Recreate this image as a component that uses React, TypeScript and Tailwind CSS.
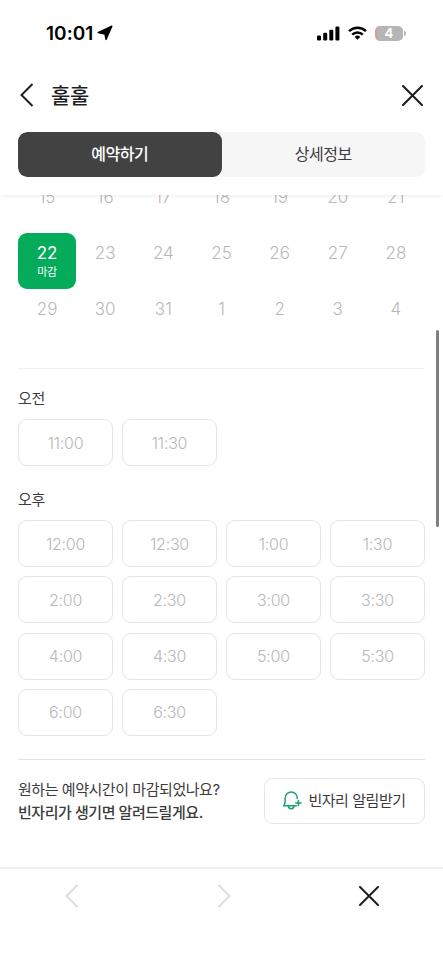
import { useState } from 'react';
import clsx from 'clsx';

const weeks = [
  [15, 16, 17, 18, 19, 20, 21],
  [22, 23, 24, 25, 26, 27, 28],
  [29, 30, 31, 1, 2, 3, 4],
];

const morningSlots = ['11:00', '11:30'];
const afternoonSlots = [
  '12:00', '12:30', '1:00', '1:30',
  '2:00', '2:30', '3:00', '3:30',
  '4:00', '4:30', '5:00', '5:30',
  '6:00', '6:30',
];

function StatusBar() {
  return (
    <div className="flex h-[66px] items-center justify-between pl-[46px] pr-[37px]">
      <div className="flex items-center gap-[4px] text-black">
        <span className="pt-px text-[19px] font-semibold leading-none tracking-[0.05px]">10:01</span>
        <svg width="16" height="16" viewBox="0 0 16 16" fill="currentColor" stroke="currentColor" strokeWidth="1.500" strokeLinejoin="round">
          <path d="M14.800 1.200 9 14.400 8 8.900 1.200 7.600z" />
        </svg>
      </div>
      <div className="flex items-center text-black">
        <svg width="23" height="15" viewBox="0 0 23 15" fill="currentColor">
          <rect x="0" y="9.500" width="4" height="5" rx="1.200" />
          <rect x="6.200" y="6.800" width="4" height="7.700" rx="1.200" />
          <rect x="12.300" y="3.700" width="4" height="10.800" rx="1.200" />
          <rect x="18.400" y="0.500" width="4" height="14" rx="1.200" />
        </svg>
        <svg className="ml-[8px]" width="19" height="14" viewBox="0 0 19 14" fill="none" stroke="currentColor" strokeWidth="2.500">
          <path d="M1 5.200a12.200 12.200 0 0 1 17 0" />
          <path d="M4.200 8.600a7.600 7.600 0 0 1 10.600 0" />
          <path d="M9.500 13.700 6.700 10.900a4 4 0 0 1 5.600 0z" fill="currentColor" stroke="none" />
        </svg>
        <div className="ml-[8px] flex h-[15px] w-[28px] items-center justify-center overflow-hidden rounded-[5px] border-l-2 border-[#e5989a] bg-[#b5b5b5] pr-[2px] text-[13px] font-bold leading-[15px] text-white">
          4
        </div>
        <div className="ml-px h-[5px] w-[2px] rounded-r-full bg-[#b5b5b5]" />
      </div>
    </div>
  );
}

function Cross({ size, className }: { size: number; className?: string }) {
  return (
    <svg width={size} height={size} viewBox="0 0 20 20" fill="none" stroke="currentColor" strokeWidth="2" strokeLinecap="round" className={className}>
      <path d="M1 1l18 18M19 1 1 19" />
    </svg>
  );
}

function Chevron({ className }: { className?: string }) {
  return (
    <svg width="14" height="24" viewBox="0 0 14 24" fill="none" stroke="currentColor" strokeWidth="2" className={className}>
      <path d="M12.500 1 1.500 12l11 11" />
    </svg>
  );
}

function SlotGrid({ slots }: { slots: string[] }) {
  return (
    <div className="grid grid-cols-4 gap-x-[9px] gap-y-[9.300px]">
      {slots.map((slot) => (
        <button key={slot} className="h-[47px] rounded-[9px] border border-[#e4e4e4] text-[16px] font-light tracking-[-0.25px] text-[#b8b8b8]">
          {slot}
        </button>
      ))}
    </div>
  );
}

export default function App() {
  const [tab, setTab] = useState('book');

  return (
    <main className="relative flex h-[960px] w-[443px] flex-col overflow-hidden bg-white font-[Inter,'Noto_Sans_CJK_KR',sans-serif] text-[#3c3c3c]">
      <header className="relative z-10 h-[195px] shrink-0 bg-white shadow-[0_1px_4px_rgba(0,0,0,0.08)]">
        <StatusBar />
        <div className="flex h-[58px] items-center pl-[20px] pr-[20px] text-[#1e1e23]">
          <Chevron />
          <h1 className="ml-[17px] text-[21px] font-medium leading-none tracking-[-0.2px]">훌훌</h1>
          <Cross size={21} className="ml-auto" />
        </div>
        <div className="mx-[18px] mt-[8px] grid h-[45px] grid-cols-2 overflow-hidden rounded-[9px] bg-[#f6f6f6] text-[16px] tracking-[-0.5px]">
          <button
            onClick={() => setTab('book')}
            className={clsx('rounded-[9px] pb-px', tab === 'book' && 'bg-[#424242] font-medium text-white')}
          >
            예약하기
          </button>
          <button
            onClick={() => setTab('info')}
            className={clsx('rounded-[9px] pb-px', tab === 'info' && 'bg-[#424242] font-medium text-white')}
          >
            상세정보
          </button>
        </div>
      </header>

      <section className="h-[672px] shrink-0 overflow-hidden px-[18px]">
        {/* calendar is scrolled slightly under the header */}
        <div className="-mt-[18px] grid grid-cols-7">
          {weeks.flat().map((day) => (
            <div
              key={day}
              className={clsx(
                'flex h-[56px] flex-col items-center rounded-[9px] pt-[10px] text-[17px] leading-[20px]',
                day === 22 ? 'bg-[#03ab5a] text-white' : 'font-light text-[#b8b8b8]'
              )}
            >
              {day}
              {day === 22 && <span className="mt-px text-[11px] leading-[16px] tracking-[-0.4px]">마감</span>}
            </div>
          ))}
        </div>

        <div className="mt-[23px] border-t border-[#f0f0f0] pt-[19px]">
          <h2 className="mb-[9px] text-[15px] leading-[22px] tracking-[-0.3px]">오전</h2>
          <SlotGrid slots={morningSlots} />
          <h2 className="mb-[9px] mt-[23px] text-[15px] leading-[22px] tracking-[-0.3px]">오후</h2>
          <SlotGrid slots={afternoonSlots} />
        </div>

        <div className="mt-[23px] flex items-start justify-between border-t border-[#e2e2e2] pt-[18px]">
          <p className="whitespace-nowrap text-[15px] leading-[23px] tracking-[-0.45px]">
            원하는 예약시간이 마감되었나요?
            <br />
            <strong className="font-medium">빈자리가 생기면 알려드릴게요.</strong>
          </p>
          <button className="flex h-[46px] w-[161px] items-center justify-center gap-[6px] whitespace-nowrap rounded-[9px] border border-[#e4e4e4] text-[15px] tracking-[-0.45px]">
            <svg width="19" height="19" viewBox="0 0 19 19" fill="none" stroke="#1fa06a" strokeWidth="1.500">
              <path d="M14.300 8V7.200C14.300 3.600 11.600 1 8.200 1S2.100 3.600 2.100 7.200v4.300L.8 14.800h13" />
              <path d="M5.300 15c.3 1.700 1.400 2.700 2.900 2.700s2.600-1 2.900-2.700" />
              <path d="M15.400 8.800v6.400M12.200 12h6.400" />
            </svg>
            빈자리 알림받기
          </button>
        </div>
      </section>

      <nav className="grid h-[93px] shrink-0 grid-cols-3 border-t-2 border-[#f0f0f0] pt-[14.500px]">
        <div className="pl-[65px] text-[#dcdcdc]"><Chevron /></div>
        <div className="flex justify-center pl-[5px] text-[#dcdcdc]"><Chevron className="rotate-180" /></div>
        <div className="flex justify-center pt-[2px] text-[#1e1e23]"><Cross size={20} /></div>
      </nav>

      {/* scroll indicator */}
      <div className="absolute right-[4px] top-[330px] h-[197px] w-[3px] rounded-full bg-[#808080]" />
    </main>
  );
}
